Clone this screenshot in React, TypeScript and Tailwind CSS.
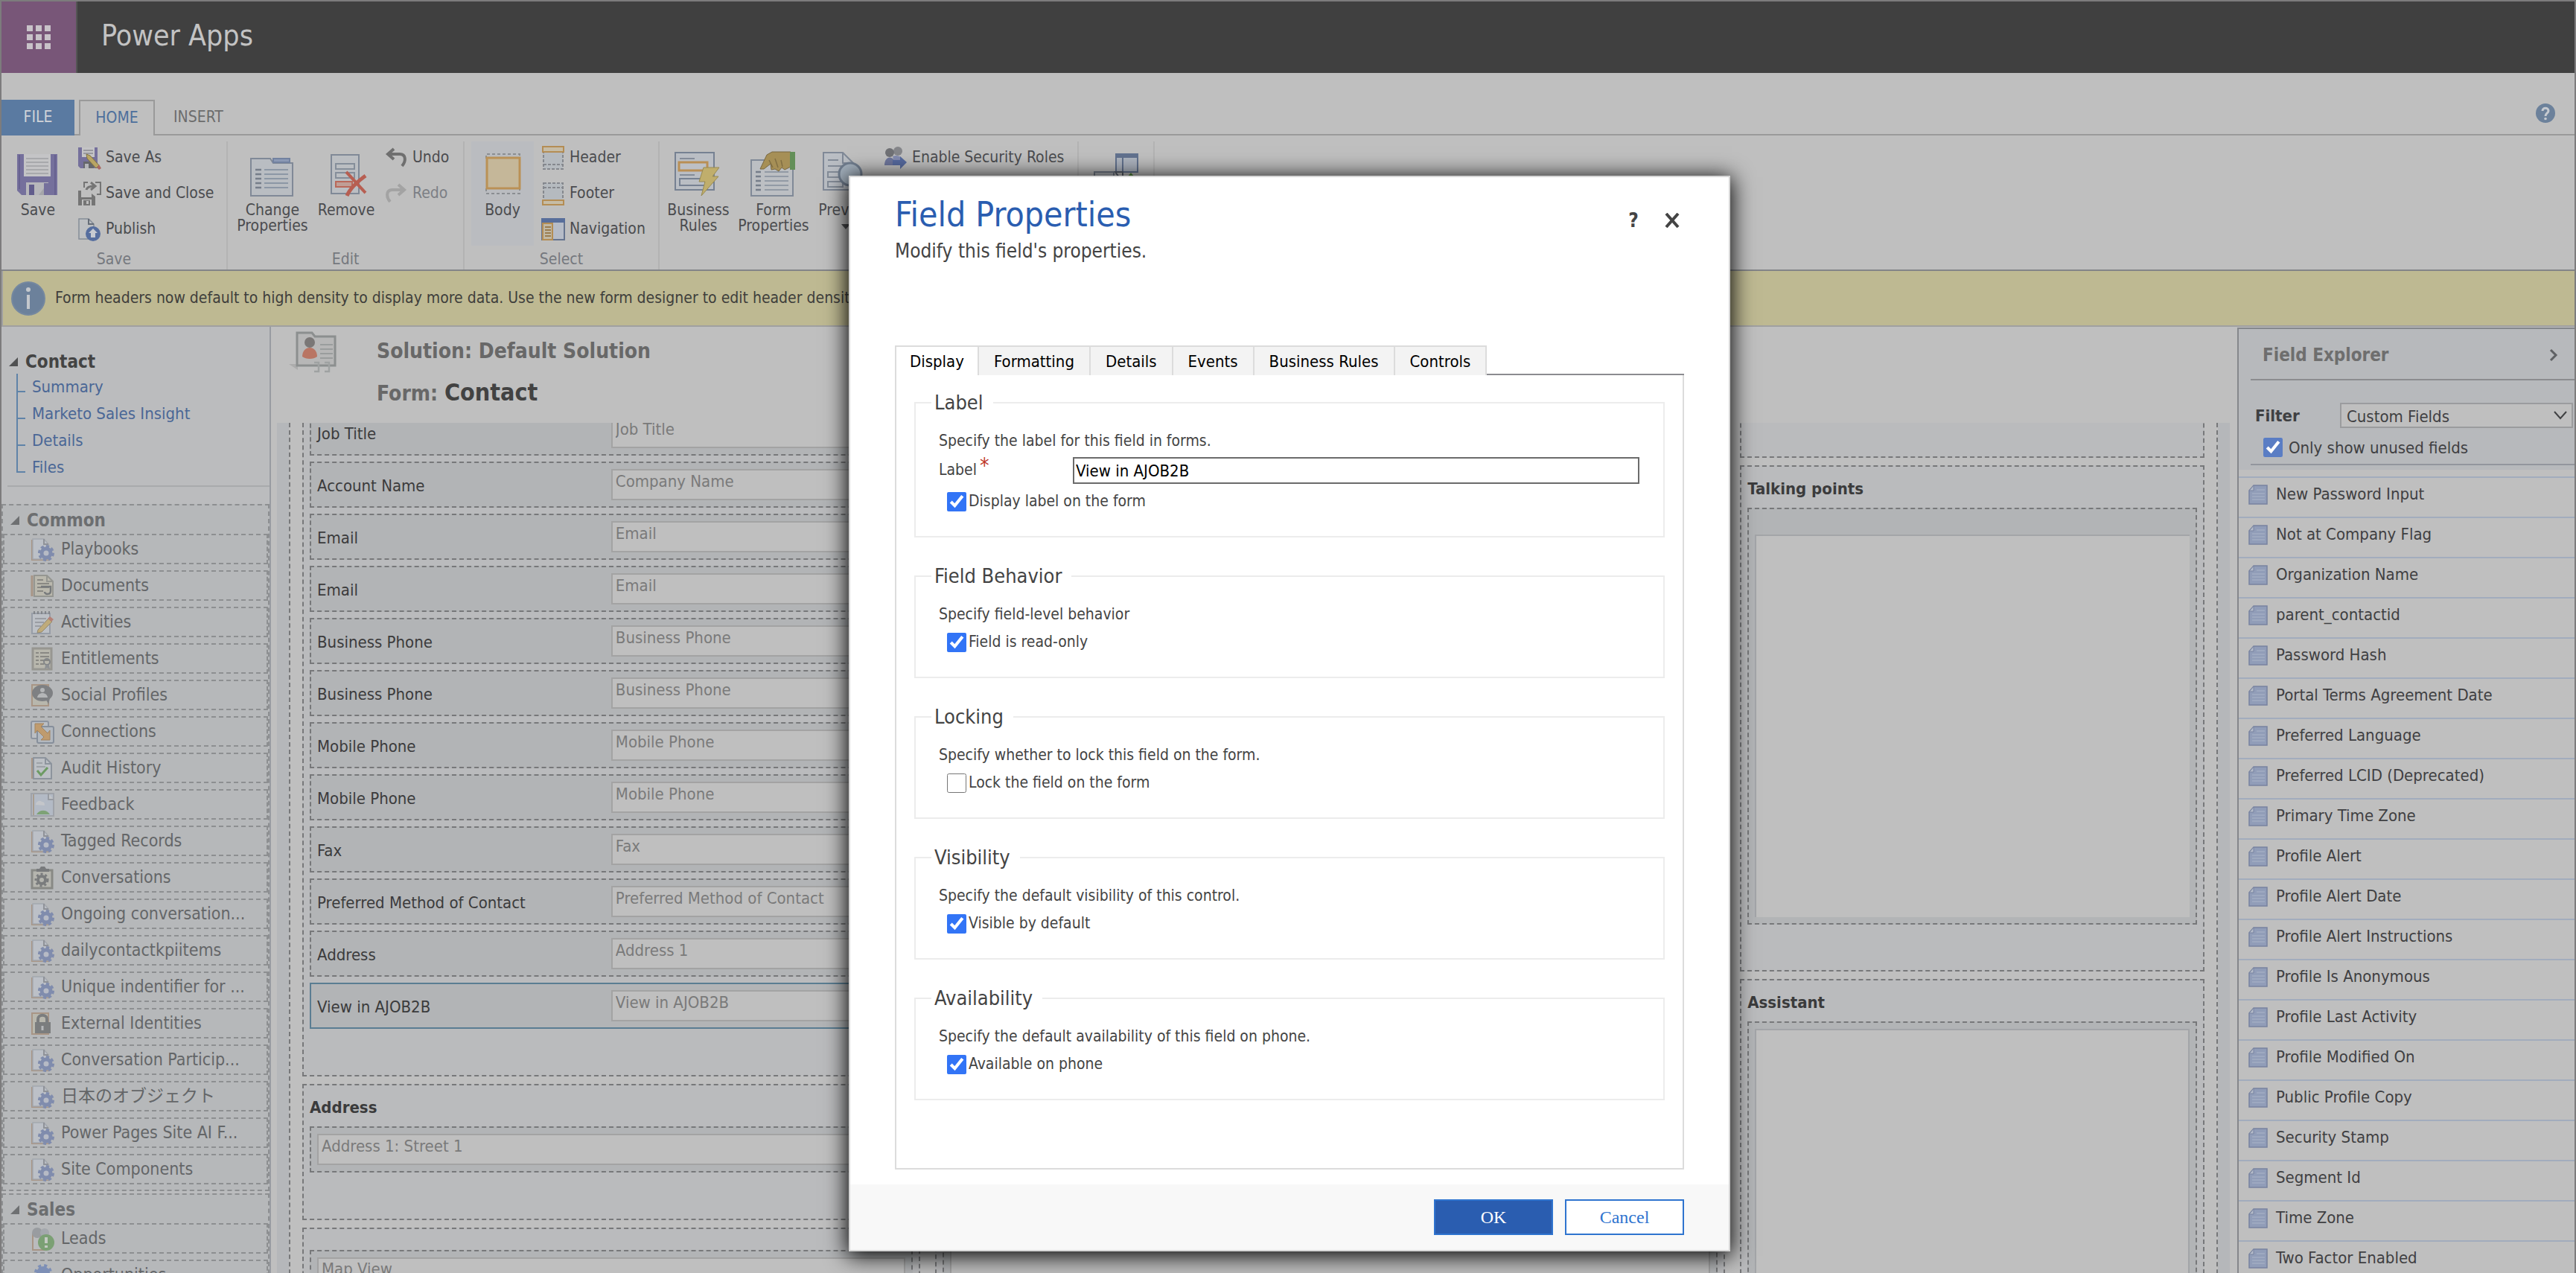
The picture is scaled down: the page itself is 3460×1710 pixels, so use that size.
import React, { ReactNode } from 'react';

/* ---------- small drawings ---------- */

const Svg = ({ box = 32, className, children }: { box?: number; className?: string; children: ReactNode }) => (
  <svg viewBox={`0 0 ${box} ${box}`} className={className} fill="none" aria-hidden="true">
    {children}
  </svg>
);

const SaveIcon = () => (
  <Svg box={64} className="size-16">
    <path d="M4 4h54v55H10l-6-6z" fill="#75709c" />
    <path d="M7 5v46M55 5v54" stroke="#676190" strokeWidth="2" />
    <rect x="13" y="4" width="36" height="30" fill="#c4c4c6" />
    <path d="M16 10h30M16 15h30M16 20h30M16 25h30M16 30h30" stroke="#a8a9ac" strokeWidth="2" />
    <rect x="16" y="42" width="30" height="17" fill="#b7b7bb" />
    <rect x="20" y="45" width="7" height="14" fill="#625d8c" />
    <path d="M33 59 45 43v16z" fill="#a4a5aa" />
    <rect x="40" y="43" width="6" height="16" fill="#75709c" />
  </Svg>
);

const SaveAsIcon = () => (
  <Svg className="size-8">
    <path d="M1 2h26v28H4l-3-3z" fill="#75709c" />
    <rect x="6" y="2" width="17" height="13" fill="#c4c4c6" />
    <path d="M8 6h13M8 10h13" stroke="#8a8b92" strokeWidth="1.500" />
    <rect x="8" y="21" width="14" height="9" fill="#66676c" />
    <rect x="10" y="24" width="5" height="6" fill="#b4b5b9" />
    <path d="m12 11 5 2 12 13-4 4L13 17z" fill="#b9a564" stroke="#7d7145" />
    <path d="m26 29 3-4 3 5-3 2z" fill="#a96862" />
  </Svg>
);

const SaveCloseIcon = () => (
  <Svg className="size-8">
    <path d="M1 12h6v9h12v-5l5 4v12H1z" fill="#757575" />
    <rect x="5" y="12" width="12" height="9" fill="#bfbfbf" />
    <rect x="6" y="24" width="13" height="8" fill="#bfbfbf" />
    <rect x="8" y="25" width="9" height="7" fill="#757575" />
    <rect x="12" y="26" width="3" height="4" fill="#bfbfbf" />
    <path d="M9 8V1h5M24 1h7v16h-5" stroke="#757575" strokeWidth="2" />
    <path d="M12 11c1-4 5-5 10-5M18 1l6 5-6 5" stroke="#757575" strokeWidth="3" />
  </Svg>
);

const PublishIcon = () => (
  <Svg className="size-8">
    <path d="M2 2h13l7 7v20H2z" fill="#bec0c3" stroke="#858d98" strokeWidth="1.5" />
    <path d="M15 2v7h7" stroke="#666d78" strokeWidth="2" />
    <circle cx="21" cy="22" r="10" fill="#566e9f" />
    <path d="m21 15 6 6h-3v6h-6v-6h-3z" fill="#c6cad2" />
  </Svg>
);

const ChangeIcon = () => (
  <Svg box={64} className="size-16">
    <path d="M3 10h26l4 6h26v44H3z" fill="#b9bdc2" stroke="#808997" strokeWidth="2" />
    <path d="M33 15v-5h22v5z" fill="#8b99b5" stroke="#7282a0" strokeWidth="2" />
    <path d="M9 25h8M9 31h8M9 37h8M9 43h8M9 49h8" stroke="#767e8a" strokeWidth="2.500" />
    <path d="M21 25h32M21 31h32M21 37h32M21 43h32M21 49h32" stroke="#8c97a5" strokeWidth="2" />
  </Svg>
);

const RemoveIcon = () => (
  <Svg box={64} className="size-16">
    <rect x="12" y="5" width="37" height="52" fill="#bbbec2" stroke="#808997" strokeWidth="2" />
    <rect x="18" y="17" width="25" height="7" stroke="#858e9a" strokeWidth="2" />
    <rect x="18" y="29" width="25" height="7" stroke="#858e9a" strokeWidth="2" />
    <rect x="18" y="41" width="22" height="7" fill="#c09e96" stroke="#b9685a" strokeWidth="2" />
    <path d="M32 28c8 8 17 19 26 28" stroke="#b75f52" strokeWidth="4" />
    <path d="M58 33C47 41 37 50 33 60" stroke="#b75f52" strokeWidth="5" />
  </Svg>
);

const UndoIcon = () => (
  <Svg className="size-8">
    <path d="M13 4 5 11l8 7M5 11h16c8 0 9 9 3 16" stroke="#6f6f6f" strokeWidth="4" />
  </Svg>
);

const RedoIcon = () => (
  <Svg className="size-8">
    <path d="m19 4 8 7-8 7M27 11H11c-8 0-9 9-3 16" stroke="#a3a3a3" strokeWidth="4" />
  </Svg>
);

const BodyIcon = () => (
  <Svg box={64} className="size-16">
    <path d="M10 10V4h45v6M10 50v7h45v-7" stroke="#8b8e92" strokeWidth="2" strokeDasharray="4 3" />
    <rect x="11" y="9" width="44" height="41" fill="#c5b799" stroke="#ba9156" strokeWidth="3" />
  </Svg>
);

const HeaderIcon = () => (
  <Svg className="size-8">
    <rect x="3" y="8" width="26" height="23" fill="#b5babf" stroke="#85888e" strokeWidth="2" strokeDasharray="4 2" />
    <rect x="2" y="1" width="28" height="7" fill="#c6bca6" stroke="#b48d54" strokeWidth="2" />
    <path d="M3 25h26" stroke="#85888e" strokeWidth="2" strokeDasharray="4 2" />
  </Svg>
);

const FooterIcon = () => (
  <Svg className="size-8">
    <rect x="3" y="2" width="26" height="23" fill="#b5babf" stroke="#85888e" strokeWidth="2" strokeDasharray="4 2" />
    <path d="M3 8h26" stroke="#85888e" strokeWidth="2" strokeDasharray="4 2" />
    <rect x="2" y="25" width="28" height="6" fill="#c6bca6" stroke="#b48d54" strokeWidth="2" />
  </Svg>
);

const NavigationIcon = () => (
  <Svg className="size-8">
    <rect x="1" y="2" width="30" height="28" fill="#b6bcc8" stroke="#66748f" strokeWidth="2" />
    <rect x="0" y="1" width="32" height="6" fill="#586e9b" />
    <rect x="2" y="8" width="13" height="22" fill="#c1b8a4" stroke="#b48d54" strokeWidth="2" />
    <path d="M5 13h8M5 17h8M5 21h8M5 25h8" stroke="#9a7d50" strokeWidth="2" />
  </Svg>
);

const RulesIcon = () => (
  <Svg box={64} className="size-16">
    <rect x="1" y="2" width="52" height="50" fill="#babec4" stroke="#768192" strokeWidth="2" />
    <path d="M7 10h20M7 32h20" stroke="#848c98" strokeWidth="2" />
    <rect x="6" y="15" width="38" height="11" fill="#bdc0c5" stroke="#b98f55" strokeWidth="3" />
    <rect x="7" y="37" width="34" height="9" stroke="#768192" strokeWidth="2" />
    <path d="M39 22h21l-9 12h8L36 60l5-19h-8z" fill="#c0ae6c" stroke="#988a52" />
  </Svg>
);

const FormPropertiesIcon = () => (
  <Svg box={64} className="size-16">
    <rect x="2" y="12" width="56" height="48" fill="#bcbfc3" stroke="#808997" strokeWidth="2" />
    <path d="M8 28h7M8 34h7M8 40h7M8 46h7M8 52h7" stroke="#767e8a" strokeWidth="2.500" />
    <path d="M20 28h32M20 34h32M20 40h32M20 46h32M20 52h32" stroke="#929aa5" strokeWidth="2" />
    <path d="m14 24 9-19 7-4h25v20l-8 4-4-3-4 5-5-3-5 1-1-8-9 7z" fill="#a68f56" stroke="#786841" />
    <path d="m26 12 5 10M34 10l4 12M42 12l2 9" stroke="#826f43" strokeWidth="1.5" />
    <rect x="54" y="1" width="7" height="24" fill="#638f58" />
  </Svg>
);

const PreviewIcon = () => (
  <Svg box={64} className="size-16">
    <path d="M2 2h26l14 14v36H2z" fill="#babec4" stroke="#808997" strokeWidth="2" />
    <path d="M28 2v14h14" stroke="#808997" strokeWidth="2" />
    <path d="M8 12h14M8 20h20" stroke="#848c98" strokeWidth="2" />
    <rect x="8" y="28" width="20" height="7" stroke="#848c98" strokeWidth="2" />
    <rect x="8" y="41" width="20" height="7" stroke="#848c98" strokeWidth="2" />
    <circle cx="38" cy="31" r="15" fill="#a5b2bf" stroke="#727f90" strokeWidth="3" />
  </Svg>
);

const RolesIcon = () => (
  <Svg className="size-8">
    <circle cx="19" cy="7" r="6" fill="#85868a" />
    <circle cx="8" cy="9" r="6" fill="#707175" />
    <path d="M1 26c0-14 14-14 15 0z" fill="#6e769c" />
    <path d="M12 14c8-3 14 2 13 8H14z" fill="#838bb0" />
    <path d="M12 19h10v-5l9 8-9 9v-5H12z" fill="#566a9f" />
  </Svg>
);

const UpgradeIcon = () => (
  <Svg box={64} className="size-16">
    <rect x="32" y="4" width="29" height="24" fill="#aeb5c0" stroke="#62728f" strokeWidth="2" />
    <rect x="31" y="3" width="31" height="6" fill="#62728f" />
    <path d="M41 8v20" stroke="#62728f" strokeWidth="2" />
    <rect x="3" y="28" width="26" height="26" fill="#b0b3b8" stroke="#737b88" strokeWidth="2" />
    <path d="M8 38h6M16 38h6" stroke="#737b88" strokeWidth="2" />
    <path d="M31 28l10 14V28z" stroke="#555d6a" strokeWidth="2" />
    <path d="m52 29 10 12H42z" fill="#538a3c" />
  </Svg>
);

const InfoIcon = () => (
  <Svg box={46} className="size-[46px]">
    <circle cx="23" cy="23" r="22" fill="#6c819b" stroke="#7588a0" strokeWidth="2" />
    <circle cx="23" cy="11" r="3" fill="#c4c8cd" />
    <path d="M23 18v19" stroke="#c4c8cd" strokeWidth="4" />
  </Svg>
);

const HelpIcon = () => (
  <Svg box={26} className="size-[26px]">
    <circle cx="13" cy="13" r="13" fill="#6c819b" />
    <path d="M9 10c0-5 8-5 8 0 0 3-4 3-4 7" stroke="#c6cad0" strokeWidth="3" />
    <circle cx="13" cy="20.500" r="1.800" fill="#c6cad0" />
  </Svg>
);

const ContactCardIcon = () => (
  <Svg box={64} className="size-16">
    <path d="M0 44h12v8z" fill="#acacac" />
    <path d="M11 2h20l4 5h27v39H11z" fill="#b7b7b7" stroke="#8c8f8f" strokeWidth="3" />
    <circle cx="28" cy="15" r="7" fill="#7a7776" />
    <path d="M18 34c0-16 20-16 20 0-5 4-15 4-20 0z" fill="#b97563" />
    <path d="M42 18h17M42 24h17M42 30h17M42 36h17" stroke="#9a9d9d" strokeWidth="2" />
    <path d="M34 42h6v12h-6M48 42h6v12h-6" stroke="#9fa2a2" strokeWidth="2.500" />
  </Svg>
);

const Sheet = () => (
  <>
    <path d="M2 3v27h24" stroke="#a3876f" strokeWidth="2" />
    <path d="M3 2h15l6 7v20H3z" fill="#bfc4cd" stroke="#9ca1aa" strokeWidth="1.5" />
    <path d="M18 2v7h6" stroke="#7f838b" strokeWidth="2" />
  </>
);

const sideIcons: Record<string, ReactNode> = {
  gear: (
    <>
      <Sheet />
      <circle cx="21" cy="21" r="9" stroke="#6a7aa8" strokeWidth="4" strokeDasharray="4 3" />
      <circle cx="21" cy="21" r="6" fill="#b6bccb" stroke="#6a7aa8" strokeWidth="5" />
    </>
  ),
  document: (
    <>
      <path d="M2 2v28" stroke="#a3876f" strokeWidth="3" />
      <path d="M5 2h17l8 8v20H5z" fill="#bcb8a8" stroke="#888880" strokeWidth="2" />
      <path d="M22 2v8h8" stroke="#888880" strokeWidth="2" />
      <path d="M9 8h8M9 13h16M9 18h16M9 23h8" stroke="#77756c" strokeWidth="2" />
      <path d="M14 17h13v6c0 5-8 5-8 1" stroke="#5d6062" strokeWidth="2.500" />
    </>
  ),
  activity: (
    <>
      <rect x="2" y="4" width="24" height="27" fill="#bfc4cc" stroke="#8a939f" strokeWidth="2" />
      <path d="M4 3h22" stroke="#6d7077" strokeWidth="4" strokeDasharray="2 3" />
      <path d="M6 11h15M6 16h12M6 21h8" stroke="#8f939a" strokeWidth="2" />
      <path d="m10 26 14-15 5 4-14 14-6 1z" fill="#c4a660" stroke="#857552" />
      <path d="m23 11 3-3 5 4-3 3z" fill="#b46a5c" />
    </>
  ),
  entitlement: (
    <>
      <rect x="3" y="2" width="25" height="28" fill="#bab7a8" stroke="#8a8880" strokeWidth="3" />
      <path d="M7 8h4M7 13h4M7 18h4M7 23h4M13 8h12M13 13h12M13 18h12M13 23h5" stroke="#77756c" strokeWidth="2" />
      <circle cx="22" cy="20" r="4" stroke="#6d7073" strokeWidth="2" />
      <path d="m20 24-1 6 3-2 4 2-1-6" fill="#7d8083" />
    </>
  ),
  social: (
    <>
      <path d="M2 2h22v28H2z" fill="#bab7a8" stroke="#a3876f" strokeWidth="2" />
      <ellipse cx="16" cy="13" rx="14" ry="11" fill="#67696c" />
      <path d="m20 20 4 8 2-8z" fill="#67696c" />
      <circle cx="16" cy="9" r="3" fill="#b4b6b8" />
      <path d="M9 19c1-8 13-8 14 0z" fill="#b4b6b8" />
    </>
  ),
  connection: (
    <>
      <rect x="1" y="2" width="23" height="23" rx="2" fill="#bcc1c8" stroke="#7d8695" strokeWidth="2" />
      <rect x="9" y="9" width="22" height="22" rx="2" fill="#b1b8c2" stroke="#737e8f" strokeWidth="2" />
      <path d="M6 5h12l-4 4 9 9 3-4v13H14l4-4-9-9-3 4z" fill="#c4904e" stroke="#9a6e38" />
    </>
  ),
  audit: (
    <>
      <path d="M2 2v28" stroke="#a3876f" strokeWidth="2" />
      <path d="M4 2h16l8 8v20H4z" fill="#bfc4cb" stroke="#7c8692" strokeWidth="2" />
      <path d="M20 2v8h8" stroke="#7c8692" strokeWidth="2" />
      <path d="M8 9h8M8 14h12" stroke="#93999f" strokeWidth="2" />
      <path d="m9 19 5 6 9-10" stroke="#4f9040" strokeWidth="3" />
    </>
  ),
  feedback: (
    <>
      <rect x="1" y="1" width="30" height="30" fill="#b3bccb" stroke="#979ba3" strokeWidth="2" />
      <path d="M7 16c0-4 5-7 8-4 4 0 4 3 4 5z" fill="#cacdd1" />
      <path d="M8 29c4-7 14-7 18 0z" fill="#679a5a" />
      <path d="M24 1v8h7" fill="#c8cacd" stroke="#8a8f98" strokeWidth="2" />
      <path d="M4 2v28" stroke="#a3937f" strokeWidth="2" />
    </>
  ),
  clipboard: (
    <>
      <path d="M2 6h27v24H2z" fill="#b5b4aa" stroke="#757670" strokeWidth="3" />
      <path d="M8 8V4h4l2-3h5l2 3h4v4z" fill="#5f6062" />
      <circle cx="15" cy="19" r="5" stroke="#616364" strokeWidth="4" />
      <circle cx="15" cy="19" r="8" stroke="#616364" strokeWidth="3" strokeDasharray="3 3" />
    </>
  ),
  lock: (
    <>
      <path d="M2 2h22v28H2z" fill="#bab7a8" stroke="#a3876f" strokeWidth="2" />
      <path d="M10 16v-6c0-7 12-7 12 0v6" stroke="#636566" strokeWidth="4" />
      <rect x="6" y="14" width="21" height="15" fill="#636566" />
      <path d="M16 19v6" stroke="#b6b8ba" strokeWidth="3" />
    </>
  ),
  lead: (
    <>
      <path d="M3 10h18v21H3z" fill="#bcbdbf" stroke="#a3876f" strokeWidth="2" />
      <circle cx="9" cy="8" r="7" fill="#8d9196" />
      <circle cx="19" cy="8" r="6" fill="#9da2a8" />
      <circle cx="21" cy="21" r="11" fill="#639657" />
      <path d="M21 14v8M21 25v3" stroke="#cad1c6" strokeWidth="4" />
    </>
  ),
  opportunity: (
    <>
      <circle cx="17" cy="13" r="9" fill="#667fb5" />
      <circle cx="17" cy="13" r="10" stroke="#667fb5" strokeWidth="4" strokeDasharray="4 4" />
      <path d="M1 18h12l4 4h14v9H1z" fill="#b5a25c" />
    </>
  ),
};

const FieldIcon = () => (
  <Svg box={28} className="size-7">
    <path d="M8 1h18v25H2V8z" fill="#919db8" stroke="#7883a0" strokeWidth="1.500" />
    <path d="M8 1v7H2z" fill="#b4bbc9" stroke="#7883a0" />
    <path d="M12 7h11M6 12h17M6 16h17M6 20h17" stroke="#a3adc2" strokeWidth="1.500" />
  </Svg>
);

const Triangle = ({ className }: { className: string }) => (
  <svg viewBox="0 0 12 12" className={`size-3 ${className}`} aria-hidden="true">
    <path d="M12 0v12H0z" fill="currentColor" />
  </svg>
);

/* ---------- ribbon ---------- */

const BigButton = ({ icon, label, className, name }: { icon: ReactNode; label?: ReactNode; className: string; name?: string }) => (
  <button aria-label={name} className={`flex h-[140px] flex-col items-center leading-[21px] ${className}`}>
    <span className="mt-[13px] mb-[5px]">{icon}</span>
    {label}
  </button>
);

const SmallButton = ({ icon, label, dim }: { icon: ReactNode; label: string; dim?: boolean }) => (
  <button className={`flex h-12 items-center gap-[6px] whitespace-nowrap ${dim ? 'text-[#7c7f85]' : ''}`}>
    {icon}
    {label}
  </button>
);

const Group = ({ label, className, children }: { label?: string; className: string; children: ReactNode }) => (
  <section className={`flex flex-col border-r-2 border-[#b3b3b3] ${className}`}>
    <div className="flex h-[140px]">{children}</div>
    {label && <h2 className="pt-1 text-center leading-[28px] text-[#75787e]">{label}</h2>}
  </section>
);

const Ribbon = () => (
  <div className="flex border-b-2 border-[#838588] pt-2 text-[21px] text-[#4b4c4f]">
    <Group label="Save" className="w-[304px]">
      <BigButton className="w-[98px]" icon={<SaveIcon />} label="Save" />
      <div className="-mt-[2px] ml-1">
        <SmallButton icon={<SaveAsIcon />} label="Save As" />
        <SmallButton icon={<SaveCloseIcon />} label="Save and Close" />
        <SmallButton icon={<PublishIcon />} label="Publish" />
      </div>
    </Group>
    <Group label="Edit" className="w-[318px]">
      <BigButton className="w-[120px]" icon={<ChangeIcon />} label={<>Change<br />Properties</>} />
      <BigButton className="w-[78px]" icon={<RemoveIcon />} label="Remove" />
      <div className="-mt-[2px] ml-3">
        <SmallButton icon={<UndoIcon />} label="Undo" />
        <SmallButton icon={<RedoIcon />} label="Redo" dim />
      </div>
    </Group>
    <Group label="Select" className="w-[262px]">
      <BigButton className="ml-[9px] w-[84px] bg-[#babcc0]" icon={<BodyIcon />} label="Body" />
      <div className="-mt-[2px] ml-[10px]">
        <SmallButton icon={<HeaderIcon />} label="Header" />
        <SmallButton icon={<FooterIcon />} label="Footer" />
        <SmallButton icon={<NavigationIcon />} label="Navigation" />
      </div>
    </Group>
    <Group className="w-[563px]">
      <BigButton className="w-[104px]" icon={<RulesIcon />} label={<>Business<br />Rules</>} />
      <BigButton className="w-[98px]" icon={<FormPropertiesIcon />} label={<>Form<br />Properties</>} />
      <BigButton
        className="w-[96px]"
        icon={<PreviewIcon />}
        label={
          <>
            Preview
            <svg viewBox="0 0 12 8" className="mt-2 h-2 w-3" aria-hidden="true">
              <path d="M0 0h12L6 7z" fill="#4b4c4f" />
            </svg>
          </>
        }
      />
      <div className="-mt-[2px] ml-[3px]">
        <SmallButton icon={<RolesIcon />} label="Enable Security Roles" />
      </div>
    </Group>
    <Group className="w-[102px]">
      <BigButton className="w-full" icon={<UpgradeIcon />} name="Merge Forms" />
    </Group>
  </div>
);

/* ---------- left navigation ---------- */

const tree = ['Summary', 'Marketo Sales Insight', 'Details', 'Files'];

const common: [string, string][] = [
  ['gear', 'Playbooks'],
  ['document', 'Documents'],
  ['activity', 'Activities'],
  ['entitlement', 'Entitlements'],
  ['social', 'Social Profiles'],
  ['connection', 'Connections'],
  ['audit', 'Audit History'],
  ['feedback', 'Feedback'],
  ['gear', 'Tagged Records'],
  ['clipboard', 'Conversations'],
  ['gear', 'Ongoing conversation...'],
  ['gear', 'dailycontactkpiitems'],
  ['gear', 'Unique indentifier for ...'],
  ['lock', 'External Identities'],
  ['gear', 'Conversation Particip...'],
  ['gear', '日本のオブジェクト'],
  ['gear', 'Power Pages Site AI F...'],
  ['gear', 'Site Components'],
];

const sales: [string, string][] = [
  ['lead', 'Leads'],
  ['opportunity', 'Opportunities'],
];

const NavSection = ({ title, items }: { title: string; items: [string, string][] }) => (
  <section className="mb-[3px] border-2 border-dashed border-[#8d8f91] bg-[#b6b8ba] pb-[7px]">
    <h3 className="flex h-[38px] items-center gap-[10px] pt-[2px] pl-[10px] text-[24px] font-bold text-[#6c6e70]">
      <Triangle className="text-[#6e7072]" />
      {title}
    </h3>
    <ul className="flex flex-col gap-2 text-[23px]">
      {items.map(([icon, name]) => (
        <li key={name}>
          <button className="flex h-[41px] w-full items-center gap-[9px] border-2 border-dashed border-[#8d8f91] pl-[35px] whitespace-nowrap text-[#646668]">
            <Svg className="size-8 opacity-70">{sideIcons[icon]}</Svg>
            {name}
          </button>
        </li>
      ))}
    </ul>
  </section>
);

const SideNav = () => (
  <nav className="w-[362px] shrink-0 overflow-hidden border-r-2 border-[#999ca2] bg-[#bbbcbe]">
    <h3 className="mt-[31px] flex h-8 items-center gap-[10px] pl-[10px] text-[24px] font-bold text-[#444]">
      <Triangle className="text-[#505152]" />
      Contact
    </h3>
    <ul className="pl-5 text-[22px]">
      {tree.map((name, i) => (
        <li key={name} className="flex h-9 gap-[9px]">
          <span className="flex flex-col">
            <span className="h-[25px] w-3 border-b-2 border-l-2 border-[#5f83a8]" />
            {i < tree.length - 1 && <span className="w-3 flex-1 border-l-2 border-[#5f83a8]" />}
          </span>
          <a href="#" className="leading-9 text-[#4a6796]">{name}</a>
        </li>
      ))}
    </ul>
    <hr className="mt-[6px] mb-[23px] ml-2 border-t-2 border-[#a8aaac]" />
    <NavSection title="Common" items={common} />
    <NavSection title="Sales" items={sales} />
  </nav>
);

/* ---------- form canvas ---------- */

const rows = [
  ['Job Title', 'Job Title'],
  ['Account Name', 'Company Name'],
  ['Email', 'Email'],
  ['Email', 'Email'],
  ['Business Phone', 'Business Phone'],
  ['Business Phone', 'Business Phone'],
  ['Mobile Phone', 'Mobile Phone'],
  ['Mobile Phone', 'Mobile Phone'],
  ['Fax', 'Fax'],
  ['Preferred Method of Contact', 'Preferred Method of Contact'],
  ['Address', 'Address 1'],
  ['View in AJOB2B', 'View in AJOB2B'],
];

const inputLook = 'block h-[42px] w-full border-2 border-[#a3a3a3] bg-[#bfbfbf] px-1 pb-[10px] outline-none placeholder:text-[#7a7a7a]';

const Section = ({ title, className = '', children }: { title?: string; className?: string; children?: ReactNode }) => (
  <section className={`border-2 border-dashed border-[#77787a] bg-[#babbbd] px-2 ${className}`}>
    {title && <h4 className="flex h-[55px] items-center pt-1 font-bold">{title}</h4>}
    {children}
  </section>
);

const Cell = ({ className = '', children }: { className?: string; children?: ReactNode }) => (
  <div className={`border-2 border-dashed border-[#77787a] bg-[#b2b4b6] p-2 ${className}`}>{children}</div>
);

const Canvas = () => (
  <main className="flex min-w-0 flex-1 flex-col overflow-hidden pr-[10px] pl-2 text-[22px] text-[#3b3b3c]">
    <header className="flex h-[129px] shrink-0 pl-4">
      <span className="mt-[6px]">
        <ContactCardIcon />
      </span>
      <div className="ml-[54px] text-[28px] font-bold text-[#686868]">
        <h1 className="mt-[13px] leading-10">Solution: Default Solution</h1>
        <h2 className="mt-[15px] leading-10">
          Form: <span className="text-[32px] text-[#424242]">Contact</span>
        </h2>
      </div>
    </header>
    <div className="min-h-0 flex-1 overflow-hidden bg-[#b5b7ba] px-4">
      <div className="-mt-10 border-x-2 border-dashed border-[#77787a] bg-[#bfbfbf] px-4">
        <div className="grid grid-cols-[830fr_1062fr_624fr] gap-5">
          <div className="flex flex-col gap-[10px]">
            <Section className="pt-5 pb-[62px]">
              <div className="flex flex-col gap-2">
                {rows.map(([label, hint], i) => (
                  <label
                    key={i}
                    className={`grid h-[62px] grid-cols-2 items-center border-2 bg-[#b2b4b6] px-2 ${
                      i === rows.length - 1 ? 'border-solid border-[#5a7d92]' : 'border-dashed border-[#77787a]'
                    }`}
                  >
                    <span className="pt-[3px]">{label}</span>
                    <input readOnly placeholder={hint} className={inputLook} />
                  </label>
                ))}
              </div>
            </Section>
            <Section title="Address" className="pb-[62px]">
              <Cell>
                <input readOnly aria-label="Address 1: Street 1" placeholder="Address 1: Street 1" className={inputLook} />
              </Cell>
            </Section>
            <Section className="pt-7">
              <Cell>
                <div className="h-[120px] border-2 border-[#a3a3a3] bg-[#bfbfbf] px-1 leading-[28px] text-[#7a7a7a]">Map View</div>
              </Cell>
            </Section>
          </div>
          <div className="grid">
            <Section className="grid">
              <Cell className="grid border-y-0">
                <div className="border-2 border-[#a3a3a3] bg-[#bfbfbf]" />
              </Cell>
            </Section>
          </div>
          <div className="flex flex-col gap-[10px]">
            <Section className="h-[87px]" />
            <Section title="Talking points" className="h-[680px]">
              <Cell className="grid h-[560px] pt-[34px]">
                <div className="border-t-2 border-l-2 border-[#a3a5a8] bg-[#bfbfbf]" />
              </Cell>
            </Section>
            <Section title="Assistant" className="flex flex-1 flex-col">
              <Cell className="grid flex-1">
                <div className="border-2 border-[#a3a5a8] bg-[#bfbfbf]" />
              </Cell>
            </Section>
          </div>
        </div>
      </div>
    </div>
  </main>
);

/* ---------- field explorer ---------- */

const fields = [
  'New Password Input', 'Not at Company Flag', 'Organization Name', 'parent_contactid', 'Password Hash',
  'Portal Terms Agreement Date', 'Preferred Language', 'Preferred LCID (Deprecated)', 'Primary Time Zone',
  'Profile Alert', 'Profile Alert Date', 'Profile Alert Instructions', 'Profile Is Anonymous',
  'Profile Last Activity', 'Profile Modified On', 'Public Profile Copy', 'Security Stamp', 'Segment Id',
  'Time Zone', 'Two Factor Enabled',
];

const Explorer = () => (
  <aside className="mt-px w-[453px] shrink-0 overflow-hidden border-t-2 border-l-2 border-[#85878b] text-[22px] text-[#3f4042]">
    <div className="bg-[#b7b9bc] pb-[6px] pl-4">
      <header className="flex h-[69px] items-center justify-between border-b-2 border-[#8b8c8f] pt-[2px] pr-[22px] pl-4">
        <h2 className="text-[24px] font-bold text-[#6e6e6e]">Field Explorer</h2>
        <button aria-label="Collapse">
          <svg viewBox="0 0 12 18" className="h-[18px] w-3" fill="none">
            <path d="m2 2 7 7-7 7" stroke="#5f6164" strokeWidth="3" />
          </svg>
        </button>
      </header>
      <div className="flex h-[64px] items-end pl-[6px]">
        <label htmlFor="filter" className="w-[114px] leading-8 font-bold">Filter</label>
        <div className="relative mr-[2px] flex-1">
          <select id="filter" className="block h-[34px] w-full appearance-none border-2 border-[#9b9c9e] bg-[#bfbfbf] pl-[7px]">
            <option>Custom Fields</option>
          </select>
          <svg viewBox="0 0 18 12" className="pointer-events-none absolute top-[11px] right-2 h-3 w-[18px]" fill="none">
            <path d="m1 1 8 9 8-9" stroke="#3f4042" strokeWidth="2" />
          </svg>
        </div>
      </div>
      <label className="mt-2 flex h-[42px] items-center gap-2 border-b-2 border-[#93969d] pb-1 pl-[17px]">
        <input type="checkbox" defaultChecked className="size-[26px] accent-[#5a7dc4]" />
        Only show unused fields
      </label>
    </div>
    <ul className="border-t-[9px] border-[#bfbfbf]">
      {fields.map((name) => (
        <li key={name} className="h-[54px] border-t-2 border-[#a2acbd]">
          <button className="flex items-start gap-[10px] pt-[9px] pl-3 leading-[26px] whitespace-nowrap">
            <FieldIcon />
            {name}
          </button>
        </li>
      ))}
    </ul>
  </aside>
);

/* ---------- dialog ---------- */

const tabs = ['Display', 'Formatting', 'Details', 'Events', 'Business Rules', 'Controls'];

const Check = ({ label, on }: { label: string; on?: boolean }) => (
  <label className="mt-[9px] flex h-[30px] items-center gap-[3px] pl-[11px]">
    <input type="checkbox" defaultChecked={on} className="size-[26px] accent-[#3274f6]" />
    {label}
  </label>
);

const Block = ({ title, note, children }: { title: string; note: string; children: ReactNode }) => (
  <fieldset className="border-2 border-[#ececec]">
    <legend className="ml-[21px] pr-[13px] pl-1 text-[27px] leading-8">{title}</legend>
    <div className="pt-[21px] pr-8 pb-[31px] pl-[31px]">
      <p className="leading-7">{note}</p>
      {children}
    </div>
  </fieldset>
);

const Dialog = () => (
  <div className="absolute inset-0 flex items-start justify-center overflow-hidden pt-[234px] pl-1">
    <div
      role="dialog"
      aria-labelledby="dialog-title"
      className="w-[1184px] border-2 border-[#d6d6d6] bg-white text-[21px] text-[#444] shadow-[0_4px_28px_2px_#000000]"
    >
      <header className="flex justify-between pt-[22px] pr-[66px] pl-[60px]">
        <div>
          <h1 id="dialog-title" className="text-[46px] leading-[56px] text-[#2a5db0]">Field Properties</h1>
          <p className="mt-[5px] text-[26px] leading-8">Modify this field's properties.</p>
        </div>
        <div className="mt-5 flex h-8 items-center gap-[34px]">
          <button aria-label="Help" className="w-4 text-[26px] leading-8 font-bold">?</button>
          <button aria-label="Close">
            <svg viewBox="0 0 20 20" className="size-5" fill="none">
              <path d="m2 1 16 18M18 1 2 19" stroke="#444" strokeWidth="4" />
            </svg>
          </button>
        </div>
      </header>
      <div className="px-[60px] pt-[111px] pb-5">
        <div className="flex text-[22px] text-black" role="tablist">
          {tabs.map((tab, i) => (
            <button
              key={tab}
              role="tab"
              aria-selected={i === 0}
              className={`h-10 border-t-2 border-r-2 border-[#dcdcdc] ${i === 0 ? 'border-l-2 bg-white px-[18px]' : 'bg-[#f3f3f3] px-[20px]'}`}
            >
              {tab}
            </button>
          ))}
          <span className="flex-1 border-b-2 border-[#8b8b90]" />
        </div>
        <div className="flex flex-col gap-9 border-x-2 border-b-2 border-[#dcdcdc] px-6 pt-[21px] pb-[91px]">
          <Block title="Label" note="Specify the label for this field in forms.">
            <div className="mt-2 flex h-9 items-center">
              <label htmlFor="field-label" className="flex w-[180px] gap-1">
                Label <span className="-mt-1 text-[28px] leading-7 text-[#c0392b]">*</span>
              </label>
              <input
                id="field-label"
                defaultValue="View in AJOB2B"
                className="h-9 flex-1 border-2 border-[#6b6b6b] px-[2px] text-[22px] text-black outline-none"
              />
            </div>
            <Check label="Display label on the form" on />
          </Block>
          <Block title="Field Behavior" note="Specify field-level behavior">
            <Check label="Field is read-only" on />
          </Block>
          <Block title="Locking" note="Specify whether to lock this field on the form.">
            <Check label="Lock the field on the form" />
          </Block>
          <Block title="Visibility" note="Specify the default visibility of this control.">
            <Check label="Visible by default" on />
          </Block>
          <Block title="Availability" note="Specify the default availability of this field on phone.">
            <Check label="Available on phone" on />
          </Block>
        </div>
      </div>
      <footer className="flex justify-end gap-4 bg-[#f8f8f8] px-[60px] py-5 font-['Liberation_Serif',serif] text-[24px]">
        <button className="h-12 w-40 border-2 border-[#2f74cf] bg-[#2a5db0] text-white">OK</button>
        <button className="h-12 w-40 border-2 border-[#2f74cf] bg-white text-[#2f74cf]">Cancel</button>
      </footer>
    </div>
  </div>
);

/* ---------- page ---------- */

export default function App() {
  return (
    <div className="relative flex h-screen flex-col overflow-hidden border-2 border-b-0 border-[#7d7c7d] bg-[#bfbfbf] font-['DejaVu_Sans_Condensed','Noto_Sans_CJK_JP',sans-serif]">
      <header className="flex h-24 shrink-0 items-center bg-[#404040]">
        <button aria-label="App launcher" className="flex h-24 w-[102px] items-center justify-center border-r-2 border-[#555] bg-[#785678]">
          <span className="grid grid-cols-3 gap-1">
            {Array.from({ length: 9 }, (_, i) => (
              <span key={i} className="size-2 bg-[#c8c2c8]" />
            ))}
          </span>
        </button>
        <span className="pb-1 pl-8 text-[39px] leading-[48px] text-[#c3c3c3]">Power Apps</span>
      </header>

      <div className="mt-9 flex h-12 shrink-0 text-[21px]">
        <button className="w-[98px] bg-[#5a7aa1] text-[#d0d3d8]">FILE</button>
        <span className="w-[6px] border-b-2 border-[#9a9a9a]" />
        <button className="w-[102px] border-2 border-b-0 border-[#9a9a9a] text-[#4d6f9c]">HOME</button>
        <div className="flex flex-1 items-center justify-between border-b-2 border-[#9a9a9a] pr-[26px] pl-[25px] text-[#6c6c6c]">
          <button className="pt-[2px]">INSERT</button>
          <button aria-label="Help" className="mb-[10px]">
            <HelpIcon />
          </button>
        </div>
      </div>
      <Ribbon />

      <div className="flex h-[75px] shrink-0 items-center gap-[13px] border-b-2 border-l-2 border-[#a0a0a0] bg-[#beb992] pl-[11px] text-[21px] whitespace-nowrap text-[#3f3f3c]">
        <InfoIcon />
        Form headers now default to high density to display more data. Use the new form designer to edit header density.
      </div>

      <div className="flex min-h-0 flex-1">
        <SideNav />
        <Canvas />
        <Explorer />
      </div>

      <Dialog />
    </div>
  );
}
